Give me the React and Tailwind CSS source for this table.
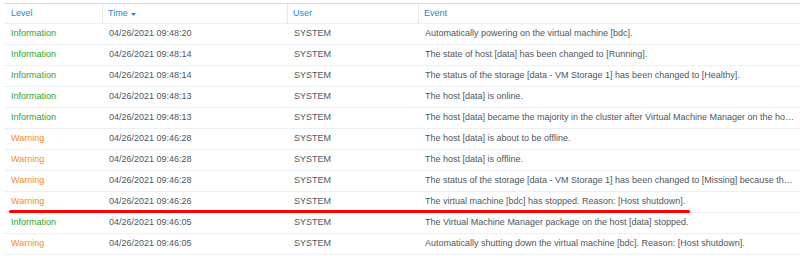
const rows = [
  ["Information", "04/26/2021 09:48:20", "SYSTEM", "Automatically powering on the virtual machine [bdc]."],
  ["Information", "04/26/2021 09:48:14", "SYSTEM", "The state of host [data] has been changed to [Running]."],
  ["Information", "04/26/2021 09:48:14", "SYSTEM", "The status of the storage [data - VM Storage 1] has been changed to [Healthy]."],
  ["Information", "04/26/2021 09:48:13", "SYSTEM", "The host [data] is online."],
  ["Information", "04/26/2021 09:48:13", "SYSTEM", "The host [data] became the majority in the cluster after Virtual Machine Manager on the host [bdc] stopped."],
  ["Warning", "04/26/2021 09:46:28", "SYSTEM", "The host [data] is about to be offline."],
  ["Warning", "04/26/2021 09:46:28", "SYSTEM", "The host [data] is offline."],
  ["Warning", "04/26/2021 09:46:28", "SYSTEM", "The status of the storage [data - VM Storage 1] has been changed to [Missing] because the host is offline."],
  ["Warning", "04/26/2021 09:46:26", "SYSTEM", "The virtual machine [bdc] has stopped. Reason: [Host shutdown]."],
  ["Information", "04/26/2021 09:46:05", "SYSTEM", "The Virtual Machine Manager package on the host [data] stopped."],
  ["Warning", "04/26/2021 09:46:05", "SYSTEM", "Automatically shutting down the virtual machine [bdc]. Reason: [Host shutdown]."],
];

const cols = "grid grid-cols-[99px_185px_131px_1fr]";

const App = () => {
  return (
    <div
      className="relative w-[800px] h-[256px] overflow-hidden bg-white text-[9px] text-[#4d5762]"
      style={{ fontFamily: '"Liberation Sans", Arial, sans-serif' }}
    >
      <div className="ml-[4px] mt-[3px]">
        {/* Header */}
        <div className={`${cols} h-[21px] border-t border-b border-t-[#d5dce4] border-b-[#eceff3] text-[#1a86e0]`}>
          <div className="flex items-center pl-[7px] border-r border-[#e6eaef]">Level</div>
          <div className="flex items-center pl-[5px] border-r border-[#e6eaef]">
            Time
            <svg width="5" height="3" viewBox="0 0 5 3" className="ml-[3px] mt-[2px]">
              <path d="M0 0h5L2.5 3z" fill="#1a86e0" />
            </svg>
          </div>
          <div className="flex items-center pl-[5px] border-r border-[#e6eaef]">User</div>
          <div className="flex items-center pl-[5px]">Event</div>
        </div>

        {/* Rows */}
        {rows.map(([level, time, user, event], i) => (
          <div key={i} className={`${cols} h-[21px] border-b border-[#eceff3]`}>
            <div
              className={`flex items-center pl-[7px] ${
                level === "Warning" ? "text-[#f98a2c]" : "text-[#2ea52e]"
              }`}
            >
              {level}
            </div>
            <div className="flex items-center pl-[6px]">{time}</div>
            <div className="flex items-center pl-[6px]">{user}</div>
            <div className="flex items-center pl-[6px] pr-[3px] min-w-0">
              <span className="truncate">{event}</span>
            </div>
          </div>
        ))}
      </div>

      {/* Red annotation line */}
      <div className="absolute left-[9px] top-[210px] w-[681px] h-[3px] rounded-full bg-[#ff0000]" />
    </div>
  );
};

export default App;
